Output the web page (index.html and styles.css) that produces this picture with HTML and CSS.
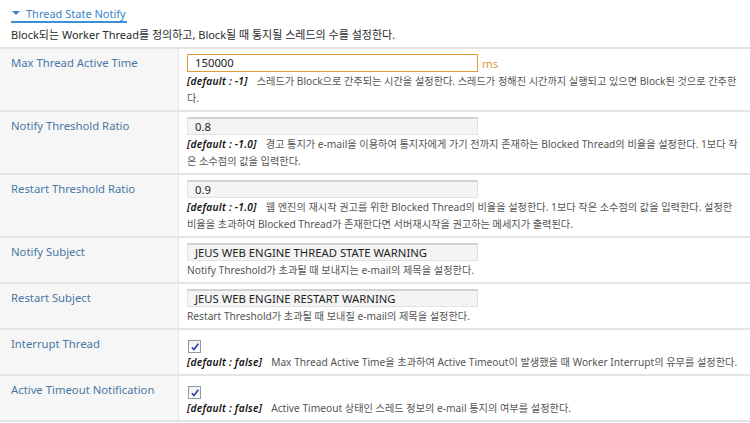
FILE: index.html
```html
<!DOCTYPE html>
<html lang="ko">
<head>
<meta charset="utf-8">
<link rel="stylesheet" href="styles.css">
</head>
<body>
<div class="page">
  <div class="section-head"><span class="tri"></span><span class="head-text">Thread State Notify</span></div>
  <p class="intro">Block되는 Worker Thread를 정의하고, Block될 때 통지될 스레드의 수를 설정한다.</p>
  <div class="table">
    <div class="row r1">
      <div class="label">Max Thread Active Time</div>
      <div class="value">
        <div class="field"><span class="input active">150000</span><span class="unit">ms</span></div>
        <div class="desc"><em>[default : -1]</em>스레드가 Block으로 간주되는 시간을 설정한다. 스레드가 정해진 시간까지 실행되고 있으면 Block된 것으로 간주한다.</div>
      </div>
    </div>
    <div class="row">
      <div class="label">Notify Threshold Ratio</div>
      <div class="value">
        <div class="field"><span class="input">0.8</span></div>
        <div class="desc"><em>[default : -1.0]</em>경고 통지가 e-mail을 이용하여 통지자에게 가기 전까지 존재하는 Blocked Thread의 비율을 설정한다. 1보다 작은 소수점의 값을 입력한다.</div>
      </div>
    </div>
    <div class="row">
      <div class="label">Restart Threshold Ratio</div>
      <div class="value">
        <div class="field"><span class="input">0.9</span></div>
        <div class="desc"><em>[default : -1.0]</em>웹 엔진의 재시작 권고를 위한 Blocked Thread의 비율을 설정한다. 1보다 작은 소수점의 값을 입력한다. 설정한 비율을 초과하여 Blocked Thread가 존재한다면 서버재시작을 권고하는 메세지가 출력된다.</div>
      </div>
    </div>
    <div class="row">
      <div class="label">Notify Subject</div>
      <div class="value">
        <div class="field"><span class="input">JEUS WEB ENGINE THREAD STATE WARNING</span></div>
        <div class="desc">Notify Threshold가 초과될 때 보내지는 e-mail의 제목을 설정한다.</div>
      </div>
    </div>
    <div class="row">
      <div class="label">Restart Subject</div>
      <div class="value">
        <div class="field"><span class="input">JEUS WEB ENGINE RESTART WARNING</span></div>
        <div class="desc">Restart Threshold가 초과될 때 보내질 e-mail의 제목을 설정한다.</div>
      </div>
    </div>
    <div class="row">
      <div class="label">Interrupt Thread</div>
      <div class="value">
        <div class="field"><span class="check"><svg width="10" height="10" viewBox="0 0 10 10"><path d="M1.8 5.2 L4 7.6 L8.3 1.8" fill="none" stroke="#2a3fb0" stroke-width="1.6"/></svg></span></div>
        <div class="desc"><em>[default : false]</em>Max Thread Active Time을 초과하여 Active Timeout이 발생했을 때 Worker Interrupt의 유무를 설정한다.</div>
      </div>
    </div>
    <div class="row">
      <div class="label">Active Timeout Notification</div>
      <div class="value">
        <div class="field"><span class="check"><svg width="10" height="10" viewBox="0 0 10 10"><path d="M1.8 5.2 L4 7.6 L8.3 1.8" fill="none" stroke="#2a3fb0" stroke-width="1.6"/></svg></span></div>
        <div class="desc"><em>[default : false]</em>Active Timeout 상태인 스레드 정보의 e-mail 통지의 여부를 설정한다.</div>
      </div>
    </div>
  </div>
</div>
</body>
</html>
```

FILE: styles.css
```css
* { box-sizing: border-box; }
html, body { margin: 0; padding: 0; background: #fff; }
body {
  font-family: "Noto Sans", "Noto Sans CJK KR", sans-serif;
  color: #333;
  width: 750px;
  overflow: hidden;
}
.page { padding-top: 5px; }
.section-head {
  display: flex;
  align-items: center;
  width: fit-content;
  margin-left: 11px;
  height: 18px;
  border-bottom: 2px solid #3b8fd6;
  padding-right: 1px;
  font-size: 11px;
  color: #3584c8;
}
.tri {
  width: 0; height: 0;
  border-left: 4px solid transparent;
  border-right: 4px solid transparent;
  border-top: 4px solid #3584c8;
  margin: 0 6px 0 1px;
}
.intro {
  margin: 3px 0 0 11px;
  font-size: 11px;
  line-height: 17px;
  color: #2a2a2a;
}
.table {
  margin-top: 4px;
  border-top: 2px solid #e4e4e4;
}
.row {
  display: flex;
  border-bottom: 2px solid #e4e4e4;
}
.label {
  width: 179px;
  flex: none;
  background: #f6f6f6;
  border-right: 1px solid #e6e6e6;
  padding: 5px 0 0 11px;
  font-size: 11.3px;
  line-height: 17px;
  color: #4a78a5;
}
.value {
  flex: 1;
  padding: 5px 8px 3px 8px;
}
.field {
  display: flex;
  align-items: center;
  height: 18px;
}
.input {
  width: 291px;
  height: 18px;
  line-height: 16px;
  padding-left: 7px;
  font-size: 11.3px;
  color: #1e1e1e;
  background: #f4f4f4;
  border: 1px solid #e2e2e2;
  border-top: 2px solid #d2d2d2;
}
.input.active {
  background: #fff;
  border: 1px solid #e39a3b;
  line-height: 16px;
}
.unit {
  margin-left: 4px;
  color: #e39a3b;
  font-size: 11.5px;
}
.check {
  margin: 5px 0 0 1px;
  width: 13px;
  height: 13px;
  border: 1px solid #8f9aa6;
  background: linear-gradient(#f0f0f0, #ffffff);
  display: flex;
  align-items: center;
  justify-content: center;
}
.desc {
  font-size: 10.2px;
  line-height: 17px;
  color: #555;
  margin-top: 1px;
  word-break: break-all;
}
.desc em {
  display: inline-block;
  white-space: nowrap;
  word-break: normal;
  font-style: italic;
  font-weight: 600;
  color: #111;
  margin-right: 8px;
  padding-right: 1px;
  letter-spacing: 0.25px;
}
```
